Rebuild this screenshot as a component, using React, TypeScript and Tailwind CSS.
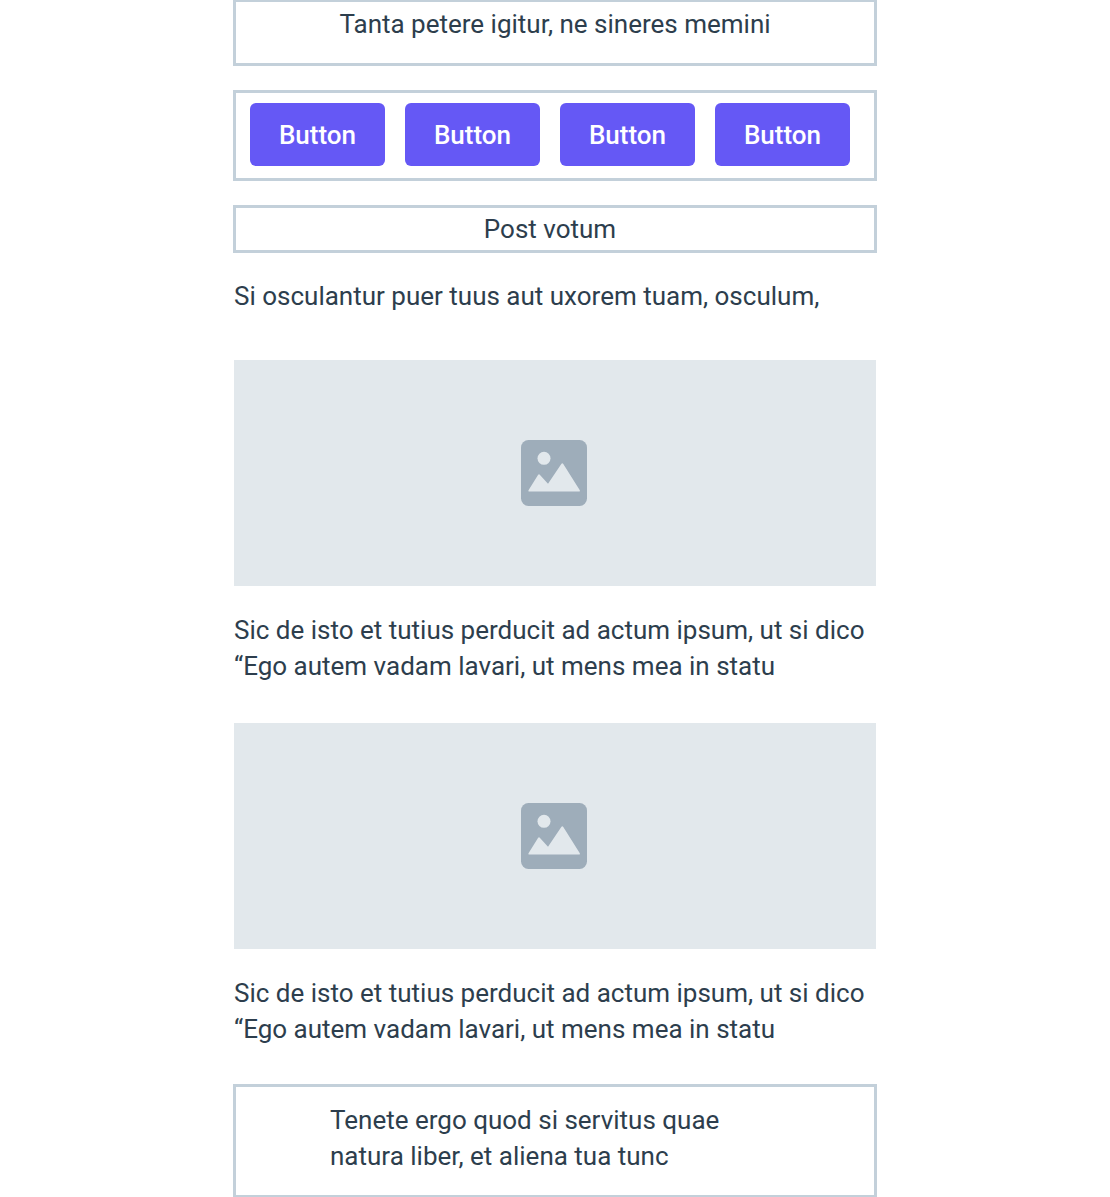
import type { ReactNode } from "react";

function ImagePlaceholder() {
  return (
    <div
      role="img"
      aria-label="Image placeholder"
      className="mx-px flex h-[226px] items-center justify-center bg-[#e2e8ec] pr-[3px]"
    >
      <svg width="66" height="66" viewBox="0 0 66 66" aria-hidden="true">
        <rect width="66" height="66" rx="7.5" fill="#9eadba" />
        <circle cx="23" cy="18.3" r="6.5" fill="#e2e8ec" />
        <path
          d="M8 51.5Q7 51.5 7.5 50.3L17 35Q18 33.6 19 35L27 43.8L40.3 24Q41.3 22.6 42.3 24L58.8 50.3Q59.3 51.5 58.3 51.5Z"
          fill="#e2e8ec"
        />
      </svg>
    </div>
  );
}

function Figure({ children }: { children: ReactNode }) {
  return (
    <section>
      <ImagePlaceholder />
      <p className="mt-[26px] px-px">{children}</p>
    </section>
  );
}

const buttons = ["first", "second", "third", "fourth"];

export default function App() {
  return (
    <div className="bg-white font-['Roboto','Liberation_Sans',sans-serif] text-[26px] leading-9 text-[#2d3e4d]">
      <main className="mx-auto max-w-[644px]">
        <header className="border-3 border-t-2 border-[#c3d0da] pt-1 pb-[21px] text-center">
          <h1>Tanta petere igitur, ne sineres memini</h1>
        </header>

        <div className="mt-6 flex gap-5 border-3 border-[#c3d0da] px-[14px] pt-[10px] pb-3">
          {buttons.map((id) => (
            <button
              key={id}
              type="button"
              className="h-[63px] w-[135px] rounded-md bg-[#6558f5] font-medium text-white"
            >
              Button
            </button>
          ))}
        </div>

        <div className="mt-6 border-3 border-[#c3d0da] pt-[3px] pr-[10px] pb-[3px] text-center">
          <h2>Post votum</h2>
        </div>

        <p className="mt-[25px] px-px">Si osculantur puer tuus aut uxorem tuam, osculum,</p>

        <div className="mt-[46px] flex flex-col gap-[39px]">
          <Figure>
            Sic de isto et tutius perducit ad actum ipsum, ut si dico
            <br />
            “Ego autem vadam lavari, ut mens mea in statu
          </Figure>
          <Figure>
            Sic de isto et tutius perducit ad actum ipsum, ut si dico
            <br />
            “Ego autem vadam lavari, ut mens mea in statu
          </Figure>
        </div>

        <footer className="mt-[37px] border-3 border-b-2 border-[#c3d0da] pt-[15px] pr-4 pb-[21px] pl-[94px]">
          <p>
            Tenete ergo quod si servitus quae
            <br />
            natura liber, et aliena tua tunc
          </p>
        </footer>
      </main>
    </div>
  );
}
